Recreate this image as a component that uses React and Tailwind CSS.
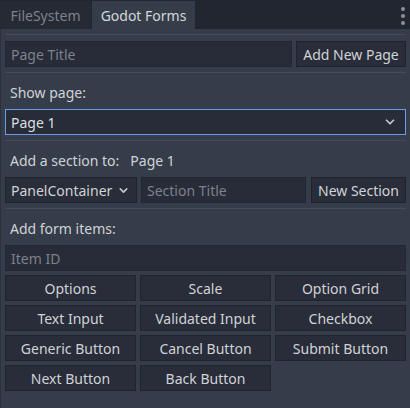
import { ChevronDown } from 'lucide-react';

const font = { fontFamily: '"Noto Sans", "Open Sans", sans-serif' };

const Sep = () => (
  <div className="h-[4px] pt-[1px]">
    <div className="h-[1px] bg-[#444c5b]" />
  </div>
);

const Label = ({ children }) => (
  <div className="h-[26px] flex items-center px-[5px] text-[14px] text-[#d0d2d6]">{children}</div>
);

const Input = ({ placeholder, className = '' }) => (
  <div className={`h-[26px] flex items-center px-[5px] bg-[#272c38] border border-[#232733] text-[14px] text-[#7c818b] ${className}`}>
    {placeholder}
  </div>
);

const Btn = ({ children, className = '' }) => (
  <div className={`h-[26px] flex items-center justify-center bg-[#282d39] border border-[#20242d] text-[14px] text-[#d0d2d6] ${className}`}>
    {children}
  </div>
);

const items = [
  'Options', 'Scale', 'Option Grid',
  'Text Input', 'Validated Input', 'Checkbox',
  'Generic Button', 'Cancel Button', 'Submit Button',
  'Next Button', 'Back Button',
];

export default function App() {
  return (
    <div className="w-[410px] h-[408px] bg-[#222630] flex flex-col overflow-hidden" style={font}>
      <div className="h-[29px] flex items-end relative">
        <div className="h-[28px] w-[91px] flex items-center justify-center text-[14px] text-[#7d828c] bg-[#252a34]">
          FileSystem
        </div>
        <div className="h-[28px] w-[103px] ml-[1px] flex items-center justify-center text-[14px] text-[#d4d6da] bg-[#363d4a]">
          Godot Forms
        </div>
        <div className="absolute right-[5px] top-[7px] flex flex-col gap-[3px]">
          <div className="w-[4px] h-[4px] rounded-full bg-[#8a8f98]" />
          <div className="w-[4px] h-[4px] rounded-full bg-[#8a8f98]" />
          <div className="w-[4px] h-[4px] rounded-full bg-[#8a8f98]" />
        </div>
      </div>
      <div className="flex-1 bg-[#363d4a] border-l border-[#2c323d] px-[4px] pt-[4px] flex flex-col gap-[4px]">
        <Sep />
        <div className="flex gap-[4px]">
          <Input placeholder="Page Title" className="flex-1" />
          <Btn className="w-[110px]">Add New Page</Btn>
        </div>
        <Sep />
        <Label>Show page:</Label>
        <div className="h-[26px] flex items-center justify-between pl-[5px] pr-[8px] bg-[#272c38] border border-[#6a9de6] text-[14px] text-[#dcdee2]">
          <span>Page 1</span>
          <ChevronDown size={14} strokeWidth={3} className="text-[#c4c7cc]" />
        </div>
        <Sep />
        <Label>
          <span>Add a section to:</span>
          <span className="ml-[11px]">Page 1</span>
        </Label>
        <div className="flex gap-[4px]">
          <div className="w-[132px] h-[26px] flex items-center justify-between pl-[5px] pr-[6px] bg-[#282d39] border border-[#20242d] text-[14px] text-[#d0d2d6]">
            <span>PanelContainer</span>
            <ChevronDown size={13} strokeWidth={3} className="text-[#c4c7cc]" />
          </div>
          <Input placeholder="Section Title" className="flex-1" />
          <Btn className="w-[95px] ml-[1px]">New Section</Btn>
        </div>
        <Sep />
        <Label>Add form items:</Label>
        <Input placeholder="Item ID" />
        <div className="grid grid-cols-3 gap-[4px]">
          {items.map(t => (
            <Btn key={t}>{t}</Btn>
          ))}
        </div>
      </div>
    </div>
  );
}
